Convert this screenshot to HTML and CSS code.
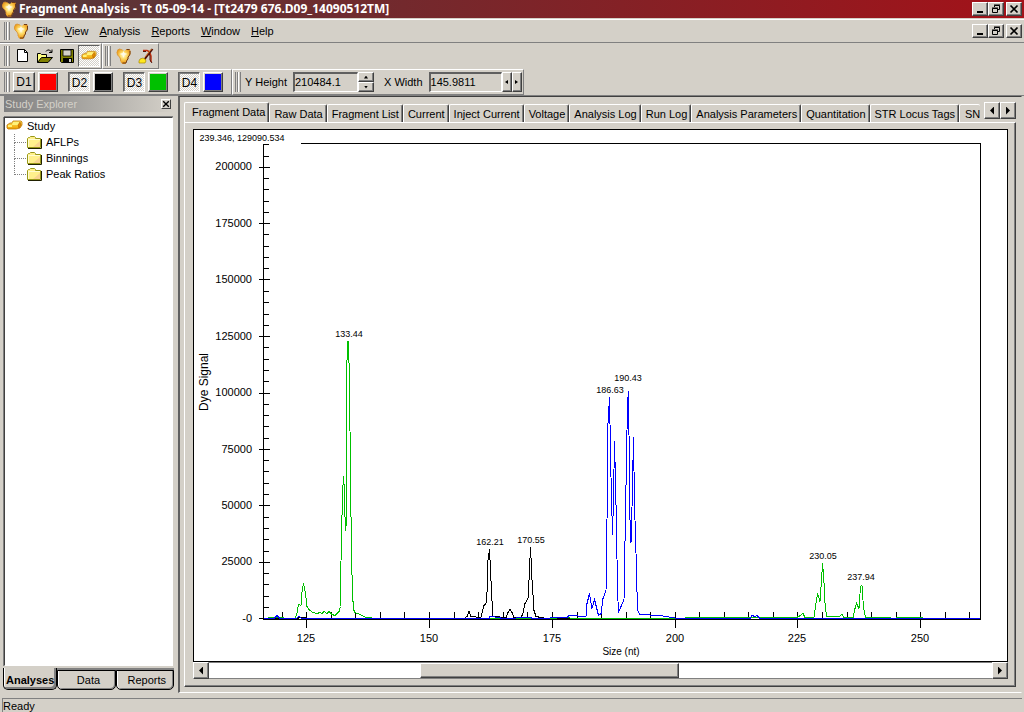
FILE: index.html
```html
<!DOCTYPE html>
<html lang="en">
<head>
<meta charset="utf-8">
<title>Fragment Analysis - Tt 05-09-14</title>
<link rel="stylesheet" href="styles.css">
</head>
<body>
<svg class="defs" aria-hidden="true">
  <defs>
    <radialGradient id="gold" cx="50%" cy="42%" r="60%">
      <stop offset="0" stop-color="#fffbe0"/><stop offset=".35" stop-color="#ffe070"/><stop offset=".75" stop-color="#f0a828"/><stop offset="1" stop-color="#d08018"/>
    </radialGradient>
    <linearGradient id="bar" x1="0" y1="0" x2="0" y2="1">
      <stop offset="0" stop-color="#ffe860"/><stop offset="1" stop-color="#f0a000"/>
    </linearGradient>
    <symbol id="nugget" viewBox="0 0 15 16">
      <path d="M1 2l2-1 3 1 2 1 2-2h3l1 2v3l-1 2-1 1v2l-1 1-1 2-1 2H6l-2-2V11L3 9 1 7 0 4z" fill="url(#gold)"/>
      <path d="M1 2l2-1 3 1M0 4l1 3 2 2 1 2v2" fill="none" stroke="#d89030" stroke-width=".8"/>
      <path d="M7 3l1 2 3 1-3 1-1 3-1-3-3-1 3-1z" fill="#fffbe8"/>
      <path d="M10 1.500h3M13.500 3v3l-1 2-1 1v2l-1 1-1 3H6" fill="none" stroke="#703c18"/>
    </symbol>
    <symbol id="ingot" viewBox="0 0 17 12">
      <path d="M1 5l3-2h2l1-2h8l1 1v3l-2 3-4 1H2L1 8z" fill="url(#bar)" stroke="#c07808" stroke-width=".8"/>
      <path d="M7 2h7l-2 3H6zM2 5h4v2H2z" fill="#fff27a"/>
      <path d="M12 5l2-3 1 3-2 3z" fill="#e88a00" stroke="#a85c00" stroke-width=".5"/>
    </symbol>
    <symbol id="folder" viewBox="0 0 16 14">
      <path d="M1.500 12.500v-9l1-1h1l1-1h4l1 1v1h5v9z" fill="#fff08c" stroke="#989818"/>
      <path d="M2 4.500h12M2.500 4v8" stroke="#fffcd0"/>
      <path d="M15.500 4v9.500H2" fill="none" stroke="#202000"/>
      <path d="M7 12h7V6z" fill="#f8d490"/>
    </symbol>
    <symbol id="min" viewBox="0 0 12 10"><path d="M3 8h6" stroke="#000" stroke-width="2"/></symbol>
    <symbol id="restore" viewBox="0 0 12 10"><path d="M4.500 3V1.500h5v4H8M4 1h6M2.500 4.500h5v4h-5zM2 4h6" fill="none" stroke="#000"/></symbol>
    <symbol id="close" viewBox="0 0 12 10"><path d="M2.500 1.500l7 7M9.500 1.500l-7 7" stroke="#000" stroke-width="1.700"/></symbol>
  </defs>
</svg>

<header class="title-bar">
  <svg class="nugget"><use href="#nugget"/></svg>
  <h1>Fragment Analysis - Tt 05-09-14 - [Tt2479 676.D09_14090512TM]</h1>
  <div class="window-buttons">
    <button aria-label="Minimize"><svg><use href="#min"/></svg></button><button aria-label="Restore"><svg><use href="#restore"/></svg></button><button aria-label="Close"><svg><use href="#close"/></svg></button>
  </div>
</header>

<nav class="menu-bar" aria-label="Main menu">
  <span class="grip"></span>
  <svg class="nugget"><use href="#nugget"/></svg>
  <button><u>F</u>ile</button><button><u>V</u>iew</button><button><u>A</u>nalysis</button><button><u>R</u>eports</button><button><u>W</u>indow</button><button><u>H</u>elp</button>
  <div class="window-buttons">
    <button aria-label="Minimize document"><svg><use href="#min"/></svg></button><button aria-label="Restore document"><svg><use href="#restore"/></svg></button><button aria-label="Close document"><svg><use href="#close"/></svg></button>
  </div>
</nav>

<div class="tool-row">
  <div class="tool-group">
    <span class="grip"></span>
    <button class="tool" aria-label="New"><svg viewBox="0 0 16 16"><path d="M2.500 1.500h7l3 3v9h-10z" fill="#fff" stroke="#000"/><path d="M9.500 1.500v3h3" fill="none" stroke="#000"/></svg></button>
    <button class="tool" aria-label="Open"><svg viewBox="0 0 16 16"><path d="M.5 14.500v-9h3l1 1h5v3" fill="#ffff80" stroke="#000"/><path d="M.5 14.500l4-5h11l-4.500 5z" fill="#808000" stroke="#000"/><path d="M9 3.500l1.500-1.500h2l2 2M15 1.500v3h-3" fill="none" stroke="#000"/></svg></button>
    <button class="tool" aria-label="Save"><svg viewBox="0 0 16 16"><path d="M1.500 1.500h13v13h-12l-1-1z" fill="#808000" stroke="#000"/><path d="M4 2h8v6H4z" fill="#d4d0c8" stroke="#000" stroke-width=".8"/><path d="M4 10h9v4H4z"/><path d="M10 11h2v3h-2z" fill="#d4d0c8"/></svg></button>
    <button class="tool pressed" aria-label="Study explorer" aria-pressed="true"><svg viewBox="0 0 17 12"><use href="#ingot"/></svg></button>
  </div>
  <div class="tool-group">
    <span class="grip"></span>
    <button class="tool" aria-label="Analyze"><svg viewBox="0 0 15 16"><use href="#nugget"/></svg></button>
    <button class="tool" aria-label="Mine data"><svg viewBox="0 0 16 16"><path d="M5 2.500h4l3 1.500M12 5l1 3v6" fill="none" stroke="#c03010" stroke-width="1.500"/><path d="M5 3.500h3M11 5l1 3v4l2 3" fill="none" stroke="#501008"/><path d="M14.500 1L6 12" stroke="#501008" stroke-width="2"/><path d="M13.500 1L7 9" stroke="#d07020"/><path d="M1 13l1-2 3-1 2 1 1 2-1 2H1z" fill="#ffe820" stroke="#a88800" stroke-width=".7"/></svg></button>
  </div>
</div>

<div class="tool-row dye-row">
  <div class="tool-group dyes">
    <span class="grip"></span>
    <div class="dye"><button class="dye-toggle">D1</button><button class="swatch red" aria-label="D1 color"></button></div>
    <div class="dye"><button class="dye-toggle pressed" aria-pressed="true">D2</button><button class="swatch black" aria-label="D2 color"></button></div>
    <div class="dye"><button class="dye-toggle pressed" aria-pressed="true">D3</button><button class="swatch green" aria-label="D3 color"></button></div>
    <div class="dye"><button class="dye-toggle pressed" aria-pressed="true">D4</button><button class="swatch blue" aria-label="D4 color"></button></div>
  </div>
  <div class="tool-group ranges">
    <span class="grip"></span>
    <label for="y-height">Y Height</label>
    <input id="y-height" type="text" value="210484.1">
    <div class="spin vertical"><button class="up" aria-label="Increase height"></button><button class="down" aria-label="Decrease height"></button></div>
    <label class="second" for="x-width">X Width</label>
    <input id="x-width" class="wide" type="text" value="145.9811">
    <div class="spin"><button class="left" aria-label="Decrease width"></button><button class="right" aria-label="Increase width"></button></div>
  </div>
</div>

<div class="body">
  <aside class="explorer">
    <div class="explorer-head"><h2>Study Explorer</h2><button aria-label="Close explorer"><svg viewBox="1 0 10 10"><use href="#close" width="12" height="10"/></svg></button></div>
    <div class="tree">
      <div class="node"><svg class="ingot"><use href="#ingot"/></svg>Study</div>
      <ul>
        <li><svg><use href="#folder"/></svg>AFLPs</li>
        <li><svg><use href="#folder"/></svg>Binnings</li>
        <li><svg><use href="#folder"/></svg>Peak Ratios</li>
      </ul>
    </div>
    <div class="sheet-tabs" role="tablist">
      <button role="tab" class="active" aria-selected="true">Analyses</button><button role="tab">Data</button><button role="tab">Reports</button>
    </div>
  </aside>

  <main class="workspace">
    <div class="tab-strip">
      <div class="tabs" role="tablist">
        <button role="tab" class="active" aria-selected="true">Fragment Data</button><button role="tab">Raw Data</button><button role="tab">Fragment List</button><button role="tab">Current</button><button role="tab">Inject Current</button><button role="tab">Voltage</button><button role="tab">Analysis Log</button><button role="tab">Run Log</button><button role="tab">Analysis Parameters</button><button role="tab">Quantitation</button><button role="tab">STR Locus Tags</button><button role="tab" class="last">SN</button>
      </div>
      <div class="tab-scroll"><button class="left" aria-label="Scroll tabs left"></button><button class="right" aria-label="Scroll tabs right"></button></div>
    </div>
    <section class="panel">
      <div class="plot">
        <svg viewBox="194 130 813 531" role="img" aria-label="Dye signal by fragment size">
          <g class="axis">
            <path d="M301 143.500H980.500V619.500H263.500V144"/>
            <path d="M259 618.500h11M259 562.500h11M259 505.500h11M259 449.500h11M259 393.500h11M259 336.500h11M259 279.500h11M259 223.500h11M259 167.500h11"/>
            <path d="M264 607.500h5M264 596.500h5M264 584.500h5M264 573.500h5M264 551.500h5M264 539.500h5M264 528.500h5M264 517.500h5M264 494.500h5M264 483.500h5M264 471.500h5M264 460.500h5M264 438.500h5M264 426.500h5M264 415.500h5M264 404.500h5M264 381.500h5M264 370.500h5M264 359.500h5M264 347.500h5M264 325.500h5M264 314.500h5M264 302.500h5M264 291.500h5M264 268.500h5M264 257.500h5M264 246.500h5M264 234.500h5M264 212.500h5M264 201.500h5M264 189.500h5M264 178.500h5M264 156.500h5M264 144.500h5"/>
            <path d="M306.500 612v16M429.500 612v16M552.500 612v16M675.500 612v16M797.500 612v16M920.500 612v16"/>
            <path d="M282.500 612v7M331.500 612v7M355.500 612v7M380.500 612v7M404.500 612v7M454.500 612v7M478.500 612v7M503.500 612v7M527.500 612v7M577.500 612v7M601.500 612v7M626.500 612v7M650.500 612v7M699.500 612v7M724.500 612v7M748.500 612v7M773.500 612v7M822.500 612v7M847.500 612v7M871.500 612v7M896.500 612v7M945.500 612v7M969.500 612v7"/>
          </g>
          <path class="trace black" d="M264 618.500L297 618.500 300 617.500 305 617.500 308 618.500 464 618.500 467 616.500 469 611.500 471 616.500 481 617.500 484 605.500 486 603.500 487 592.500 488 560.500 489.500 549.500 491 580.500 492 600.500 493 616.500 506 617.500 508 612.500 510 609.500 512 612.500 514 617.500 521 617.500 523 613.500 525 603.500 528 598.500 529 580.500 530.500 547.500 532 579.500 534 610.500 536 616.500 546 618.500 745 618.500"/>
          <path class="trace green" d="M264 618.500L272 617.500 295 618.500 297 613.500 298.500 604.500 301 605.500 302 592.500 303.500 583.500 305.500 593.500 307 606.500 309 609.500 313 612.500 317 613.500 320 612.500 322 613.500 324 611.500 327 613.500 329 611.500 332 614.500 335 615.500 337 613.500 339 611.500 340.500 606.500 341 561 342 516 343 485 343.500 476 344.500 491 345 517 346 531 346.500 380 347.500 341 348.500 341 349.500 384 350.500 476 351.500 555 352.500 593 353.500 609.500 355 612.500 360 614.500 366 617.500 377 618.500 550 618.500 565 617.500 575 618.500 796 617.500 799 616.500 803 613.500 805 617.500 814 617.500 816 603.500 817.500 593.500 820 601.500 821.500 580.500 822.500 563.500 823.500 573.500 825 602.500 826.500 616.500 839 616.500 842 614.500 844 617.500 853 617.500 855 608.500 856.500 603.500 859 608.500 860.500 586.500 862 585.500 863.500 607.500 865.500 617.500 885 617.500 896 618.500 897 617.500 902 617.500 914 617.500 922 617.500 924 618.500"/>
          <path class="trace blue" d="M264 618.500L274 618.500 277 615.500 280 618.500 296 618.500 299 616.500 302 618.500 489 618.500 490 616.500 499 617.500 502 618.500 530 617.500 533 618.500 567 617.500 569 615.500 586 616.500 587 603.500 589.500 593.500 592 608.500 594.500 599.500 598.500 615.500 601 613.500 603 598.500 606 590.500 607 520 608 423 609.500 397 611 477 612.500 535 613.500 497 614.500 441 615.500 480 616.500 527 617.500 590 618.500 612.500 621 606.500 624 599.500 625.500 513 627.500 403 628.500 391 630 520 631 543 632 507 633.500 437 634.500 503 636 553 637.500 610.500 640 614.500 660 615.500 678 618.500 750 618.500 752 615.500 755 616.500 757 615.500 760 618.500 980 618.500"/>
          <g class="tick-labels end">
            <text x="252" y="170">200000</text><text x="252" y="227">175000</text><text x="252" y="283">150000</text><text x="252" y="340">125000</text><text x="252" y="396">100000</text><text x="252" y="453">75000</text><text x="252" y="509">50000</text><text x="252" y="565">25000</text><text x="252" y="622">-0</text>
          </g>
          <g class="tick-labels">
            <text x="306" y="642">125</text><text x="429" y="642">150</text><text x="552" y="642">175</text><text x="675" y="642">200</text><text x="797" y="642">225</text><text x="920" y="642">250</text>
          </g>
          <g class="peak-labels">
            <text x="242" y="141">239.346, 129090.534</text>
            <text x="349" y="337">133.44</text><text x="490" y="545">162.21</text><text x="531" y="543">170.55</text><text x="610" y="393">186.63</text><text x="628" y="381">190.43</text><text x="823" y="559">230.05</text><text x="861" y="580">237.94</text>
          </g>
          <text class="x-title" x="621" y="655">Size (nt)</text>
          <text class="y-title" transform="translate(208 382) rotate(-90)">Dye Signal</text>
        </svg>
      </div>
      <div class="scrollbar">
        <button class="left" aria-label="Scroll left"></button>
        <div class="track"><div class="thumb"></div></div>
        <button class="right" aria-label="Scroll right"></button>
      </div>
    </section>
  </main>
</div>

<footer class="status"><span>Ready</span></footer>
</body>
</html>
```
FILE: styles.css
```css
* { box-sizing: border-box; }

body {
  margin: 0;
  height: 100vh;
  display: flex;
  flex-direction: column;
  overflow: hidden;
  background: #d4d0c8;
  color: #000;
  font: 11px/14px "Liberation Sans", Arial, sans-serif;
}

h1, h2 { margin: 0; font: inherit; }
svg { display: block; flex: none; }
button { font: inherit; color: inherit; padding: 0; margin: 0; border: 0; background: #d4d0c8; flex: none; }
.defs { position: absolute; width: 0; height: 0; }
.nugget { width: 15px; height: 16px; }

/* Title bar and menu */
.title-bar {
  flex: none;
  display: flex;
  align-items: center;
  gap: 2px;
  height: 18px;
  padding: 0 2px;
  background: linear-gradient(90deg, #54383a, #a31219);
  color: #fff;
}
.title-bar h1 { font: bold 12px/16px "Noto Sans", "DejaVu Sans", sans-serif; white-space: nowrap; }
.window-buttons { display: flex; margin-left: auto; }
.window-buttons button {
  width: 16px;
  height: 14px;
  padding: 1px;
  border: 1px solid;
  border-color: #fff #404040 #404040 #fff;
  box-shadow: inset -1px -1px #808080;
}
.window-buttons button:last-child { margin-left: 2px; }
.window-buttons svg { width: 12px; height: 10px; }

.menu-bar {
  flex: none;
  display: flex;
  align-items: center;
  height: 24px;
  margin-top: 1px;
  padding: 0 2px 0 4px;
  border-top: 1px solid #fff;
  border-bottom: 1px solid #808080;
}
.menu-bar > .nugget { margin: 0 2px 0 4px; }
.menu-bar > button { padding: 0 5px; }
.menu-bar > button + button { padding-left: 6px; }

.grip {
  flex: none;
  width: 6px;
  align-self: stretch;
  margin: 2px 0;
  border: solid;
  border-width: 0 1px;
  border-color: #fff #808080;
  background: linear-gradient(90deg, #d4d0c8 1px, #808080 1px 2px, #fff 2px 3px, #d4d0c8 3px);
}

/* Toolbars */
.tool-row { flex: none; display: flex; height: 26px; }
.tool-group {
  display: flex;
  align-items: center;
  padding: 0 1px 0 4px;
  border: solid;
  border-width: 1px 1px 1px 0;
  border-color: #fff #808080 #808080 #fff;
}
.tool-group + .tool-group { border-left-width: 1px; padding-left: 2px; }
.tool { width: 22px; height: 22px; padding: 2px; }
.tool svg { width: 16px; height: 16px; margin: auto; }
.grip + .tool { margin-left: 2px; }
.pressed, .dye-toggle.pressed {
  border: 1px solid;
  border-color: #606060 #fff #fff #606060;
  background: repeating-conic-gradient(#fff 0 25%, #d4d0c8 0 50%) 0 0 / 2px 2px;
}
.dye-row { border-bottom: 1px solid #808080; height: 27px; }
.dyes { min-width: 232px; gap: 10px; padding-right: 0; }
.dyes .grip { margin-right: -7px; }
.dye { display: flex; gap: 3px; }
.dye-toggle {
  width: 22px;
  height: 20px;
  font-size: 12px;
  border: 1px solid;
  border-color: #fff #404040 #404040 #fff;
  box-shadow: inset -1px -1px #808080;
}
.dye-toggle.pressed { padding: 2px 0 0 1px; box-shadow: inset 1px 1px #808080; }
.swatch { width: 20px; height: 20px; border: 1px solid; border-color: #fff #404040 #404040 #fff; box-shadow: inset -1px -1px #808080, inset 1px 1px #d4d0c8; }
.swatch.red { background: #f00; }
.swatch.black { background: #000; }
.swatch.green { background: #00c000; }
.swatch.blue { background: #00f; }
.ranges label { margin: 0 6px 0 4px; }
.ranges label.second { margin-left: 10px; }
.ranges input {
  width: 65px;
  height: 20px;
  padding: 0 0 2px;
  font: inherit;
  background: #d4d0c8;
  border: solid;
  border-width: 2px 1px 1px 2px;
  border-color: #606060 #fff #fff #606060;
  border-radius: 0;
}
.ranges input.wide { width: 73px; }
.spin { display: flex; width: 20px; height: 20px; }
.spin button, .tab-scroll button, .scrollbar button {
  display: grid;
  place-items: center;
  border: 1px solid;
  border-color: #fff #404040 #404040 #fff;
  box-shadow: inset -1px -1px #808080;
}
.spin button { width: 10px; height: 20px; }
.spin.vertical { flex-direction: column; width: 16px; }
.spin.vertical button { width: 16px; height: 10px; }
button.left::after, button.right::after, button.up::after, button.down::after { content: ""; width: 4px; height: 8px; background: #000; }
button.left::after { clip-path: polygon(100% 0, 100% 100%, 0 50%); }
button.right::after { clip-path: polygon(0 0, 0 100%, 100% 50%); }
.spin .left::after, .spin .right::after { width: 3px; height: 4px; }
.spin .up::after, .spin .down::after { width: 4px; height: 3px; }
button.up::after { clip-path: polygon(50% 0, 100% 100%, 0 100%); }
button.down::after { clip-path: polygon(0 0, 100% 0, 50% 100%); }

/* Explorer */
.body { flex: 1; min-height: 0; display: flex; }
.explorer { flex: none; width: 178px; display: flex; flex-direction: column; padding: 0 5px 3px 4px; }
.explorer-head {
  flex: none;
  display: flex;
  align-items: center;
  justify-content: space-between;
  height: 16px;
  padding: 0 2px 0 1px;
  margin-bottom: 5px;
  background: linear-gradient(90deg, #808080, #d4d0c8);
  color: #d4d0c8;
}
.explorer-head button { width: 10px; height: 10px; border: solid; border-width: 1px; border-color: #fff #404040 #404040 #fff; }
.explorer-head svg { width: 8px; height: 8px; }
.tree {
  flex: 1;
  background: #fff;
  border: 1px solid;
  border-color: #404040 #fff #fff #404040;
  box-shadow: 0 -1px #808080, -1px 0 #808080;
}
.tree .node, .tree li { display: flex; align-items: center; gap: 4px; height: 16px; }
.tree .node { padding-left: 1px; }
.tree .ingot { width: 17px; height: 12px; }
.tree li svg { width: 16px; height: 14px; }
.tree ul { list-style: none; margin: 0 0 0 9px; padding: 0; }
.tree li { position: relative; padding-left: 12px; }
.tree li::before { content: ""; position: absolute; left: 0; top: 0; width: 11px; height: 8px; border: dotted #808080; border-width: 0 0 1px 1px; }
.tree li:not(:last-child)::after { content: ""; position: absolute; left: 0; top: 8px; height: 8px; border-left: 1px dotted #808080; }
.sheet-tabs { flex: none; display: flex; height: 22px; margin: 2px -1px 0; }
.sheet-tabs button {
  flex: 1;
  padding-left: 4px;
  border: 1px solid #000;
  border-radius: 0 0 5px 5px;
  box-shadow: 0 -2px #808080, inset 1px 0 #fff, inset -1px -1px #808080;
  margin-top: 2px;
}
.sheet-tabs .active {
  padding: 2px 0 0;
  font-weight: bold;
  border-top: 0;
  margin-top: 0;
  box-shadow: inset -2px -2px #808080, inset 1px 0 #fff;
}

/* Workspace */
.workspace {
  flex: 1;
  min-width: 0;
  display: flex;
  flex-direction: column;
  margin-right: 2px;
  padding: 5px 5px 5px 4px;
  border: solid;
  border-width: 1px 1px 1px 2px;
  border-color: #404040 #d4d0c8 #fff #606060;
}
.tab-strip { flex: none; display: flex; height: 20px; }
.tabs { flex: 1; min-width: 0; overflow: hidden; display: flex; align-items: flex-end; }
.tabs button {
  height: 18px;
  padding: 1px 3px 0 4px;
  white-space: nowrap;
  border: solid;
  border-width: 1px 1px 0;
  border-color: #fff #404040 #fff #fff;
  border-radius: 2px 2px 0 0;
  box-shadow: inset -1px 0 #808080;
}
.tabs .active { height: 20px; padding: 0 3px 1px 7px; }
.tabs .last { border-right: 0; box-shadow: none; padding: 1px 0 0 5px; }
.tab-scroll { flex: none; display: flex; height: 17px; }
.tab-scroll button { width: 16px; height: 17px; }
.panel {
  flex: 1;
  min-height: 0;
  display: flex;
  flex-direction: column;
  padding: 6px 7px 7px 8px;
  border: 1px solid;
  border-color: #fff #404040 #404040 #fff;
  box-shadow: inset -1px -1px #808080;
}
.plot { flex: 1; min-height: 0; background: #fff; border: 1px solid #000; }
.plot svg { width: 100%; height: 100%; }
.axis path, .trace { fill: none; stroke: #000; shape-rendering: crispEdges; }
.trace.green { stroke: #00c000; }
.trace.blue { stroke: #00f; }
.plot text { text-anchor: middle; font-size: 11px; }
.plot .end text { text-anchor: end; }
.plot .peak-labels text { font-size: 9px; }
.plot .x-title { font-size: 10px; }
.plot .y-title { font-size: 12px; }
.scrollbar { flex: none; display: flex; height: 17px; }
.scrollbar button { width: 16px; }
.track { flex: 1; display: flex; background: #fff; border: solid #808080; border-width: 1px 0; }
.thumb { width: 33%; margin-left: 27%; background: #d4d0c8; border: 1px solid; border-color: #fff #404040 #404040 #fff; box-shadow: inset -1px -1px #808080; }

/* Status */
.status { flex: none; padding: 5px 2px 0; }
.status span { display: block; height: 14px; border-top: 1px solid #808080; border-left: 1px solid #808080; line-height: 14px; }
```
